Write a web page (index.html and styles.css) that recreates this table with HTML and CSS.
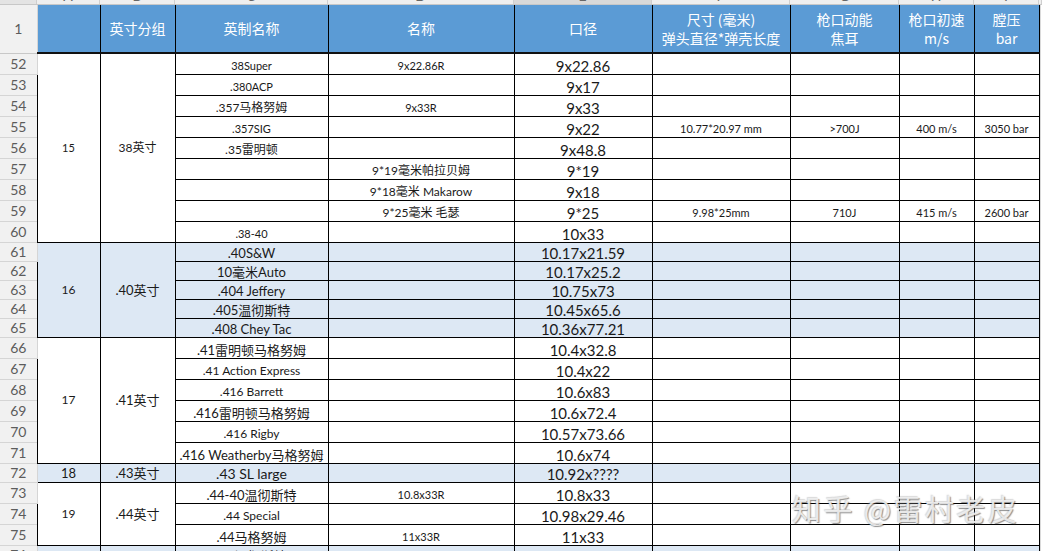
FILE: index.html
```html
<!DOCTYPE html>
<html lang="zh-CN">
<head>
<meta charset="utf-8">
<title>口径表</title>
<link rel="stylesheet" href="styles.css">
</head>
<body>
<div class="page">
  <div class="colbar">
    <div class="ch corner"></div>
    <div class="ch"><span>A</span></div>
    <div class="ch"><span>B</span></div>
    <div class="ch"><span>C</span></div>
    <div class="ch"><span>D</span></div>
    <div class="ch sel"><span>E</span></div>
    <div class="ch"><span>F</span></div>
    <div class="ch"><span>G</span></div>
    <div class="ch"><span>H</span></div>
    <div class="ch"><span>I</span></div>
    <div class="ch"></div>
  </div>
  <table class="sheet">
    <colgroup>
      <col class="w-rn"><col class="w-a"><col class="w-b"><col class="w-c"><col class="w-d"><col class="w-e"><col class="w-f"><col class="w-g"><col class="w-h"><col class="w-i">
    </colgroup>
    <tr class="head">
      <td class="rn">1</td>
      <th></th>
      <th>英寸分组</th>
      <th>英制名称<i class="handle"></i></th>
      <th>名称</th>
      <th>口径</th>
      <th>尺寸 (毫米)<br>弹头直径*弹壳长度</th>
      <th>枪口动能<br>焦耳</th>
      <th>枪口初速<br>m/s</th>
      <th>膛压<br>bar</th>
    </tr>
    <tr class="r">
      <td class="rn">52</td>
      <td class="grp f11" rowspan="9">15</td>
      <td class="grp f12" rowspan="9">38英寸</td>
      <td class="nm f11">38Super</td>
      <td class="al">9x22.86R</td>
      <td class="cal">9x22.86</td>
      <td></td><td></td><td></td><td></td>
    </tr>
    <tr class="r">
      <td class="rn">53</td>
      <td class="nm f11">.380ACP</td>
      <td></td>
      <td class="cal">9x17</td>
      <td></td><td></td><td></td><td></td>
    </tr>
    <tr class="r">
      <td class="rn">54</td>
      <td class="nm f12">.357马格努姆</td>
      <td class="al">9x33R</td>
      <td class="cal">9x33</td>
      <td></td><td></td><td></td><td></td>
    </tr>
    <tr class="r">
      <td class="rn">55</td>
      <td class="nm f11">.357SIG</td>
      <td></td>
      <td class="cal">9x22</td>
      <td class="sm">10.77*20.97 mm</td>
      <td class="sm">&gt;700J</td>
      <td class="sm">400 m/s</td>
      <td class="sm">3050 bar</td>
    </tr>
    <tr class="r">
      <td class="rn">56</td>
      <td class="nm f12">.35雷明顿</td>
      <td></td>
      <td class="cal">9x48.8</td>
      <td></td><td></td><td></td><td></td>
    </tr>
    <tr class="r">
      <td class="rn">57</td>
      <td class="nm"></td>
      <td class="al f12">9*19毫米帕拉贝姆</td>
      <td class="cal">9*19</td>
      <td></td><td></td><td></td><td></td>
    </tr>
    <tr class="r">
      <td class="rn">58</td>
      <td class="nm"></td>
      <td class="al f12">9*18毫米 Makarow</td>
      <td class="cal">9x18</td>
      <td></td><td></td><td></td><td></td>
    </tr>
    <tr class="r">
      <td class="rn">59</td>
      <td class="nm"></td>
      <td class="al f12">9*25毫米 毛瑟</td>
      <td class="cal">9*25</td>
      <td class="sm">9.98*25mm</td>
      <td class="sm">710J</td>
      <td class="sm">415 m/s</td>
      <td class="sm">2600 bar</td>
    </tr>
    <tr class="r">
      <td class="rn">60</td>
      <td class="nm f11">.38-40</td>
      <td></td>
      <td class="cal">10x33</td>
      <td></td><td></td><td></td><td></td>
    </tr>
    <tr class="b">
      <td class="rn">61</td>
      <td class="grp f12" rowspan="5">16</td>
      <td class="grp f13" rowspan="5">.40英寸</td>
      <td class="nm f13">.40S&amp;W</td>
      <td></td>
      <td class="cal">10.17x21.59</td>
      <td></td><td></td><td></td><td></td>
    </tr>
    <tr class="b">
      <td class="rn">62</td>
      <td class="nm f13">10毫米Auto</td>
      <td></td>
      <td class="cal">10.17x25.2</td>
      <td></td><td></td><td></td><td></td>
    </tr>
    <tr class="b">
      <td class="rn">63</td>
      <td class="nm f13">.404 Jeffery</td>
      <td></td>
      <td class="cal">10.75x73</td>
      <td></td><td></td><td></td><td></td>
    </tr>
    <tr class="b">
      <td class="rn">64</td>
      <td class="nm f13">.405温彻斯特</td>
      <td></td>
      <td class="cal">10.45x65.6</td>
      <td></td><td></td><td></td><td></td>
    </tr>
    <tr class="b">
      <td class="rn">65</td>
      <td class="nm f13">.408 Chey Tac</td>
      <td></td>
      <td class="cal">10.36x77.21</td>
      <td></td><td></td><td></td><td></td>
    </tr>
    <tr class="r">
      <td class="rn">66</td>
      <td class="grp f12" rowspan="6">17</td>
      <td class="grp f13" rowspan="6">.41英寸</td>
      <td class="nm f13">.41雷明顿马格努姆</td>
      <td></td>
      <td class="cal">10.4x32.8</td>
      <td></td><td></td><td></td><td></td>
    </tr>
    <tr class="r">
      <td class="rn">67</td>
      <td class="nm f12">.41 Action Express</td>
      <td></td>
      <td class="cal">10.4x22</td>
      <td></td><td></td><td></td><td></td>
    </tr>
    <tr class="r">
      <td class="rn">68</td>
      <td class="nm f12">.416 Barrett</td>
      <td></td>
      <td class="cal">10.6x83</td>
      <td></td><td></td><td></td><td></td>
    </tr>
    <tr class="r">
      <td class="rn">69</td>
      <td class="nm f13">.416雷明顿马格努姆</td>
      <td></td>
      <td class="cal">10.6x72.4</td>
      <td></td><td></td><td></td><td></td>
    </tr>
    <tr class="r">
      <td class="rn">70</td>
      <td class="nm f12">.416 Rigby</td>
      <td></td>
      <td class="cal">10.57x73.66</td>
      <td></td><td></td><td></td><td></td>
    </tr>
    <tr class="r">
      <td class="rn">71</td>
      <td class="nm f13">.416 Weatherby马格努姆</td>
      <td></td>
      <td class="cal">10.6x74</td>
      <td></td><td></td><td></td><td></td>
    </tr>
    <tr class="b">
      <td class="rn">72</td>
      <td class="grp f13">18</td>
      <td class="grp f13">.43英寸</td>
      <td class="nm f14">.43 SL large</td>
      <td></td>
      <td class="cal">10.92x????</td>
      <td></td><td></td><td></td><td></td>
    </tr>
    <tr class="r">
      <td class="rn">73</td>
      <td class="grp f12" rowspan="3">19</td>
      <td class="grp f13" rowspan="3">.44英寸</td>
      <td class="nm f13">.44-40温彻斯特</td>
      <td class="al">10.8x33R</td>
      <td class="cal">10.8x33</td>
      <td></td><td></td><td></td><td></td>
    </tr>
    <tr class="r">
      <td class="rn">74</td>
      <td class="nm f12">.44 Special</td>
      <td></td>
      <td class="cal">10.98x29.46</td>
      <td></td><td></td><td></td><td></td>
    </tr>
    <tr class="r">
      <td class="rn">75</td>
      <td class="nm f13">.44马格努姆</td>
      <td class="al">11x33R</td>
      <td class="cal">11x33</td>
      <td></td><td></td><td></td><td></td>
    </tr>
    <tr class="b">
      <td class="rn">76</td>
      <td></td><td></td>
      <td class="nm f13">.45温彻斯特</td>
      <td></td><td></td>
      <td></td><td></td><td></td><td></td>
    </tr>
  </table>
  <div class="watermark">知乎 @雷村老皮</div>
</div>
</body>
</html>
```

FILE: styles.css
```css
html, body {
  margin: 0;
  padding: 0;
  background: #fff;
}
body {
  width: 1042px;
  height: 551px;
  overflow: hidden;
  font-family: Lato, "Noto Sans CJK SC", sans-serif;
  color: #1a1a1a;
}
.page {
  position: relative;
  width: 1042px;
  height: 551px;
  overflow: hidden;
  background-image: linear-gradient(#dadada, #dadada);
  background-repeat: no-repeat;
  background-position: 1040px 0;
  background-size: 1px 100%;
}

/* column letters band, only its bottom edge is visible */
.colbar {
  display: grid;
  grid-template-columns: 37px 63px 75px 153px 186px 138px 138px 109px 75px 65px 3px;
  height: 5px;
  overflow: hidden;
  background: #efefef;
  border-bottom: 1px solid #c8c8c8;
  box-sizing: border-box;
}
.ch {
  border-right: 1px solid #cfcfcf;
  text-align: center;
  font-size: 14px;
  color: #666;
  line-height: 14px;
}
.ch span {
  display: block;
  margin-top: -11px;
}
.ch.sel {
  background: #d9d9d9;
}
.ch.corner {
  background: #e4e4e4;
}

.sheet {
  border-collapse: collapse;
  table-layout: fixed;
  width: 1039px;
}
.w-rn { width: 37px; }
.w-a { width: 63px; }
.w-b { width: 75px; }
.w-c { width: 153px; }
.w-d { width: 186px; }
.w-e { width: 138px; }
.w-f { width: 138px; }
.w-g { width: 109px; }
.w-h { width: 75px; }
.w-i { width: 65px; }

.sheet td, .sheet th {
  border: 1px solid #000;
  padding: 0 1px;
  text-align: center;
  vertical-align: bottom;
  white-space: nowrap;
  overflow: hidden;
  font-weight: normal;
  line-height: 16px;
  font-size: 11px;
}

.head {
  height: 48px;
}
.sheet .head th {
  background: #5b9bd5;
  color: #fff;
  font-family: "Noto Sans CJK SC", Lato, sans-serif;
  font-size: 14px;
  line-height: 19px;
  vertical-align: middle;
  border-top: none;
  border-bottom: 2px solid #111;
  position: relative;
}
.handle {
  position: absolute;
  left: 89px;
  bottom: -3px;
  width: 4px;
  height: 3px;
  background: #111;
}

.r { height: 21px; }
.b { height: 19px; }
.b td { background: #dde8f4; }

.sheet td.rn {
  background: #f1f1f1;
  border: 1px solid #d5d5d5;
  border-left: none;
  color: #5c5c5c;
  font-size: 14px;
  line-height: 16px;
  vertical-align: middle;
  padding: 0;
}
.sheet .head td.rn {
  background: #f1f1f1;
  border-top: none;
  border-bottom: 1px solid #c8c8c8;
}
.sheet .b td.rn {
  background: #f1f1f1;
}

.sheet td.grp {
  vertical-align: middle;
}
.sheet td.cal {
  font-size: 15px;
  line-height: 16px;
}
.sheet td.al {
  font-size: 11px;
}
.sheet td.sm {
  font-size: 11px;
}
.sheet td.f11 { font-size: 11px; }
.sheet td.f12 { font-size: 12px; }
.sheet td.f13 { font-size: 13px; line-height: 16px; }
.sheet td.f14 { font-size: 14px; line-height: 16px; }

.watermark {
  position: absolute;
  left: 792px;
  top: 488px;
  font-family: "Noto Sans CJK SC", sans-serif;
  font-size: 29px;
  line-height: 40px;
  letter-spacing: 2.4px;
  color: rgba(240, 240, 240, 0.92);
  text-shadow: 1px 1px 1px rgba(70, 70, 70, 0.6), -1px -1px 1px rgba(150, 150, 150, 0.35);
  white-space: nowrap;
}
```
